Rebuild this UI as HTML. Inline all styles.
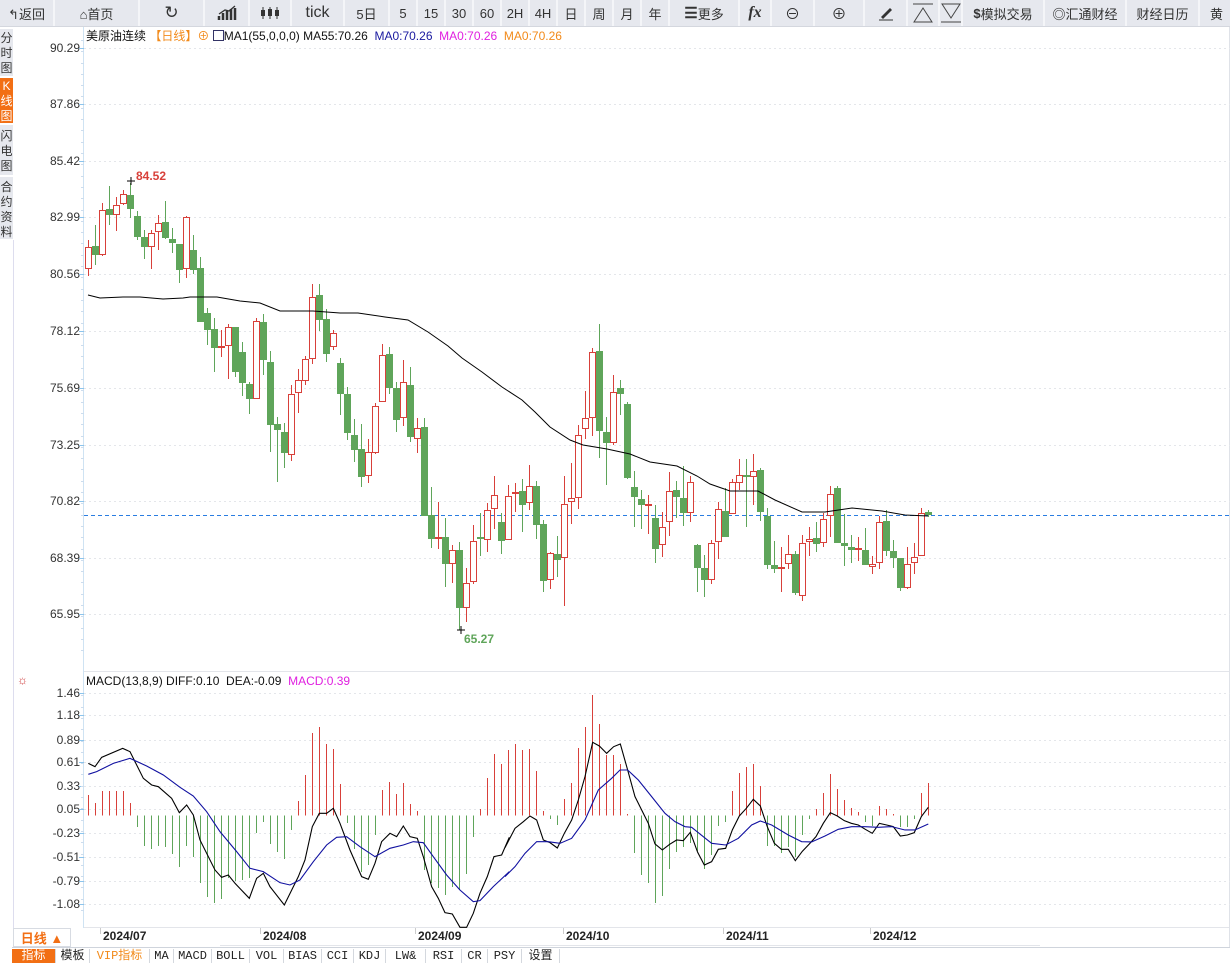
<!DOCTYPE html>
<html><head><meta charset="utf-8">
<style>
*{margin:0;padding:0;box-sizing:border-box}
body{width:1230px;height:961px;overflow:hidden;background:#fff;font-family:"Liberation Sans","Noto Sans CJK SC",sans-serif;position:relative}
#tb{position:absolute;left:0;top:0;width:1230px;height:27px;background:#e6e8ee;border-bottom:1px solid #d4d7de}
.b{position:absolute;top:0;height:26px;border-right:2px solid #f4f5f8;font-size:13px;color:#333;display:flex;align-items:center;justify-content:center;white-space:nowrap;overflow:hidden}
#side{position:absolute;left:0;top:27px;width:13px}
.tab{position:absolute;left:0;width:13px;background:#e6e8ee;color:#333;font-size:12px;line-height:15px;text-align:center;border-bottom:2px solid #fff}
.lab{position:absolute;font-size:12px;color:#333;text-align:right;width:70px;left:10px}
svg{position:absolute;left:0;top:0}
</style></head><body>
<div id="tb">
<div class="b" style="left:0;width:55px">&#x21B0;返回</div>
<div class="b" style="left:55px;width:85px">&#x2302;首页</div>
<div class="b" style="left:140px;width:65px;font-size:17px">&#x21BB;</div>
<div class="b" style="left:205px;width:45px"><svg style="position:static" width="20" height="16"><path d="M2 15V11M6 15V8M10 15V6M14 15V4M18 15V3" stroke="#333" stroke-width="2.5"/><path d="M2 9L8 5L12 6L18 1" stroke="#333" fill="none" stroke-width="1.3"/></svg></div>
<div class="b" style="left:250px;width:42px"><svg style="position:static" width="18" height="14"><path d="M2 1V13M9 1V13M16 1V13" stroke="#333"/><rect x="0" y="4" width="4" height="6" fill="#333"/><rect x="7" y="3" width="4" height="7" fill="#333"/><rect x="14" y="4" width="4" height="6" fill="#333"/></svg></div>
<div class="b" style="left:292px;width:53px;font-size:16px">tick</div>
<div class="b" style="left:345px;width:45px">5日</div>
<div class="b" style="left:390px;width:28px">5</div>
<div class="b" style="left:418px;width:28px">15</div>
<div class="b" style="left:446px;width:28px">30</div>
<div class="b" style="left:474px;width:28px">60</div>
<div class="b" style="left:502px;width:28px">2H</div>
<div class="b" style="left:530px;width:28px">4H</div>
<div class="b" style="left:558px;width:28px">日</div>
<div class="b" style="left:586px;width:28px">周</div>
<div class="b" style="left:614px;width:28px">月</div>
<div class="b" style="left:642px;width:28px">年</div>
<div class="b" style="left:670px;width:70px"><b style="font-size:15px">&#x2630;</b>更多</div>
<div class="b" style="left:740px;width:32px;font-family:'Liberation Serif',serif;font-style:italic;font-weight:bold;font-size:16px">fx</div>
<div class="b" style="left:772px;width:43px;font-size:15px">&#x2296;</div>
<div class="b" style="left:815px;width:50px;font-size:15px">&#x2295;</div>
<div class="b" style="left:865px;width:43px"><svg style="position:static" width="16" height="16"><path d="M3 12L12 3L14 5L5 14Z" fill="#333"/><path d="M1 15H15" stroke="#333"/></svg></div>
<div class="b" style="left:908px;width:32px"><svg style="position:static" width="22" height="20"><path d="M1 1H21M2 19L11 5L20 19Z" stroke="#444" fill="none"/></svg></div>
<div class="b" style="left:940px;width:23px"><svg style="position:static" width="22" height="20"><path d="M1 19H21M2 1L11 15L20 1Z" stroke="#444" fill="none"/></svg></div>
<div class="b" style="left:963px;width:82px"><b>$</b>模拟交易</div>
<div class="b" style="left:1045px;width:82px"><b>&#x25CE;</b>汇通财经</div>
<div class="b" style="left:1127px;width:73px">财经日历</div>
<div class="b" style="left:1200px;width:40px;justify-content:flex-start;padding-left:10px">黄</div>
</div>
<div id="side">
<div class="tab" style="top:2px;height:49px;padding-top:2px">分<br>时<br>图</div>
<div class="tab" style="top:51px;height:47px;background:#f26f14;color:#fff;padding-top:1px">K<br>线<br>图</div>
<div class="tab" style="top:98px;height:52px;padding-top:4px">闪<br>电<br>图</div>
<div class="tab" style="top:150px;height:64px;padding-top:3px">合<br>约<br>资<br>料</div>
</div>
<div style="position:absolute;left:86px;top:27px;font-size:12px;white-space:nowrap;color:#111">美原油连续 <span style="color:#f28a1a">【日线】⊕</span> <span style="display:inline-block;width:11px;height:11px;border:1px solid #336;vertical-align:-1px"></span>MA1(55,0,0,0) MA55:70.26 &nbsp;<span style="color:#1a1aa0">MA0:70.26</span> &nbsp;<span style="color:#e020e0">MA0:70.26</span> &nbsp;<span style="color:#f28a1a">MA0:70.26</span></div>
<div style="position:absolute;left:86px;top:674px;font-size:12px;white-space:nowrap;color:#111">MACD(13,8,9) DIFF:0.10 &nbsp;DEA:-0.09 &nbsp;<span style="color:#e020e0">MACD:0.39</span></div>
<div style="position:absolute;left:17px;top:673px;font-size:12px;color:#c33">&#x263C;</div>
<div id="labs"></div>
<svg id="s" width="1230" height="961"></svg>
<div style="position:absolute;left:13px;top:928px;width:58px;height:19px;border:1px solid #d7dbe2;color:#f26f14;font-size:13px;font-weight:bold;display:flex;align-items:center;justify-content:center;background:#fff">日线 ▲</div>
<div id="dates"></div>
<div id="bt" style="position:absolute;left:12px;top:947px;height:14px;width:1218px;font-size:12px;white-space:nowrap;border-top:1px solid #cfd4dc"></div>
<script>
var NS="http://www.w3.org/2000/svg",s=document.getElementById('s');
function el(t,a){var e=document.createElementNS(NS,t);for(var k in a)e.setAttribute(k,a[k]);s.appendChild(e);return e;}
// frame
el('line',{x1:83.5,y1:27,x2:83.5,y2:928,stroke:'#cfe3f3'});
el('line',{x1:13.5,y1:240,x2:13.5,y2:928,stroke:'#dde'});
el('line',{x1:84,y1:671.5,x2:1230,y2:671.5,stroke:'#e3e5ea'});
el('line',{x1:84,y1:927.5,x2:1230,y2:927.5,stroke:'#e3e5ea'});
el('line',{x1:1229.5,y1:27,x2:1229.5,y2:947,stroke:'#dfe2e8'});
var L=document.getElementById('labs'),h='';
var P=[["90.29",48],["87.86",104],["85.42",161],["82.99",217],["80.56",274],["78.12",331],["75.69",388],["73.25",445],["70.82",501],["68.39",558],["65.95",614],
["1.46",693],["1.18",715],["0.89",740],["0.61",762],["0.33",786],["0.05",809],["-0.23",833],["-0.51",857],["-0.79",881],["-1.08",904]];
P.forEach(function(p){h+='<div class="lab" style="top:'+(p[1]-7)+'px">'+p[0]+'</div>';
el('line',{x1:84,y1:p[1]+.5,x2:1230,y2:p[1]+.5,stroke:'#e4e6ea','stroke-dasharray':'2,3'});
el('line',{x1:79,y1:p[1]+.5,x2:84,y2:p[1]+.5,stroke:'#8cc4ec'});});
L.innerHTML=h;
for(var y=40;y<920;y+=11.3){if(y>660&&y<688)continue;el('line',{x1:81,y1:Math.round(y)+.5,x2:84,y2:Math.round(y)+.5,stroke:'#cde'});}
el('line',{x1:84,y1:515.5,x2:1230,y2:515.5,stroke:'#2a7de1','stroke-dasharray':'4,3'});
// candles: top,bottom,wtop,wbot,red
var C=[[247,269,240,276,1],[246,255,225,265,0],[210,255,203,256,1],[209,215,186,225,0],[205,215,197,231,1],[194,204,190,205,1],[195,209,183,218,0],[216,237,211,240,0],[237,247,230,259,0],[233,247,230,269,1],[223,232,215,250,1],[222,238,201,239,0],[239,243,228,253,0],[244,270,244,283,0],[217,269,216,278,1],[250,270,235,274,0],[268,322,257,322,0],[313,330,308,345,0],[329,348,318,372,0],[346,348,330,357,1],[327,346,324,379,1],[327,372,327,377,0],[352,383,342,396,0],[384,399,382,414,0],[321,399,318,399,1],[322,360,314,375,0],[362,425,351,452,0],[424,430,417,482,0],[432,453,423,468,0],[394,455,385,461,1],[380,393,369,413,1],[359,381,356,385,1],[297,359,284,364,1],[295,320,284,331,0],[319,354,309,362,0],[333,347,330,350,1],
[363,394,358,415,0],[394,433,387,440,0],[435,450,419,462,0],[449,477,424,487,0],[452,476,439,483,1],[406,453,403,454,1],[355,402,344,402,1],[354,388,347,394,0],[388,420,382,432,0],[382,418,360,426,1],[385,437,367,442,0],[428,439,418,453,1],[427,516,418,516,0],[515,539,487,548,0],[537,539,502,549,1],[537,564,518,587,0],[550,564,545,583,1],[550,608,542,630,0],[583,608,568,622,1],[541,582,525,584,1],[537,539,513,556,0],[510,540,503,552,1],[495,509,476,529,1],[522,541,513,554,0],[496,540,485,540,1],[492,494,483,512,1],[491,505,479,532,0],[486,503,465,510,1],
[486,525,481,539,0],[524,581,520,592,0],[553,580,552,589,1],[554,560,536,577,0],[504,558,476,606,1],[498,502,463,524,1],[435,498,425,509,1],[418,429,391,439,1],[352,418,348,436,1],[351,431,324,458,0],[432,443,417,485,0],[392,443,375,445,1],[388,394,380,415,0],[404,478,402,479,0],[487,497,471,527,0],[499,505,490,529,0],[504,506,495,534,1],[518,549,505,563,0],[527,545,512,557,1],[491,522,472,536,1],[490,497,481,518,0],[498,513,466,526,0],[482,513,476,522,1],[545,568,544,592,0],[568,580,555,597,0],[543,580,540,584,1],[509,542,502,559,1],
[511,537,488,537,0],[482,514,479,514,1],[475,483,459,490,1],[475,477,459,527,0],[471,477,454,505,1],[470,512,468,521,0],[516,565,508,569,0],[565,569,541,573,0],[567,569,547,592,1],[554,564,535,569,1],[554,593,551,595,0],[543,596,535,601,1],[539,542,527,556,1],[538,544,522,552,0],[519,543,513,547,1],[494,516,486,537,1],[488,543,486,543,0],[543,546,514,566,0],[547,550,535,563,0],[548,550,537,561,1],[550,565,528,565,0],[564,567,556,574,1],[522,563,516,569,1],[521,551,510,556,0],[551,558,540,568,0],[558,588,558,591,0],[564,588,547,589,1],[557,563,543,574,1],[513,556,508,556,1],[512,515,510,517,0]];
var R='#d8403a',G='#5fa55a';
C.forEach(function(c,i){var x=88+7*i,col=c[4]?R:G;
el('line',{x1:x+.5,y1:c[2],x2:x+.5,y2:c[3],stroke:col});
var hh=Math.max(c[1]-c[0],1);
if(c[4])el('rect',{x:x-2.5,y:c[0]+.5,width:6,height:Math.max(hh-1,1),fill:'#fff',stroke:col});
else el('rect',{x:x-3,y:c[0],width:7,height:hh,fill:col});});
// MA55
el('polyline',{points:'88,295 100,298 123,297 140,297 163,299 183,298 190,297 217,297 240,301 260,303 280,311 313,311 340,313 358,313 385,317 408,320 428,332 448,346 462,358 482,372 502,387 522,400 535,412 550,427 570,440 583,445 607,449 630,454 650,462 677,466 697,476 710,484 730,491 758,491 775,500 802,512 825,512 852,508 882,511 905,515 928,516',fill:'none',stroke:'#000'});
// hi/lo markers
el('path',{d:'M127 181H135M131 177V185M457 630H465M461 626V634',stroke:'#000'});
var t=el('text',{x:136,y:180,fill:'#d8403a','font-size':12,'font-weight':'bold','font-family':'Liberation Sans'});t.textContent='84.52';
t=el('text',{x:464,y:643,fill:'#5fa55a','font-size':12,'font-weight':'bold','font-family':'Liberation Sans'});t.textContent='65.27';
// MACD hist
var M=[795,803,791,791,791,791,803,827,846,849,846,847,854,867,846,857,883,897,903,899,878,881,880,878,833,822,844,852,859,830,801,775,733,727,744,749,784,823,849,872,865,835,790,782,794,783,804,811,870,883,888,895,887,890,874,837,809,778,754,764,750,744,750,749,771,811,819,825,799,783,748,727,695,724,755,755,764,814,853,875,883,903,896,869,852,847,843,851,869,855,826,822,791,773,767,764,786,846,846,853,847,857,835,819,809,793,774,789,800,808,812,822,826,806,809,814,827,827,819,793,783];
M.forEach(function(v,i){var x=88+7*i+.5;el('line',{x1:x,y1:815.5,x2:x,y2:v,stroke:v<815?R:G});});
function poly(pts,ox,col){var g=el('g',{transform:'translate('+ox+',690) scale(0.3333)'});var p=document.createElementNS(NS,'polyline');p.setAttribute('points',pts);p.setAttribute('fill','none');p.setAttribute('stroke',col);p.setAttribute('stroke-width',3.3);g.appendChild(p);}
poly('25,220 45,230 65,202 128,175 150,185 190,265 215,285 235,290 275,325 298,368 320,345 340,375 360,450 405,540 425,562 445,555 465,580 508,625 530,565 550,550 570,590 613,645 655,560 675,510 697,410 718,370 740,370 760,355 780,400 810,480 845,560 865,568 885,520 905,455 930,430 950,440 970,408 990,440 1012,445 1030,500 1055,590 1075,625 1095,668 1117,672 1140,712 1160,712 1180,670 1200,610 1222,560 1242,500 1265,495 1288,442',80,'#000');
poly('0,473 30,415 55,395 75,378 95,390 115,450 135,458 157,474 178,430 200,390 220,330 240,260 263,157 283,168 305,190 326,170 346,162 368,240 390,320 430,400 450,462 472,480 494,463 515,450 535,452 556,427 578,487 598,525 620,515 640,478 662,475 682,420 703,378 724,355 745,328 766,348 787,410 808,460 829,478 850,478 871,512 892,484 913,462 933,440 955,400 976,368 997,378 1018,392 1039,400 1060,405 1081,418 1102,430 1123,400 1145,405 1165,410 1186,438 1207,435 1228,428 1249,380 1270,352',505,'#000');
poly('25,253 50,245 100,220 150,205 200,228 250,255 300,292 340,318 380,365 420,425 470,485 510,535 550,545 600,578 630,585 660,570 700,515 740,465 770,442 800,440 840,470 885,500 930,475 970,465 1000,455 1030,458 1060,500 1100,555 1140,600 1180,635 1200,632 1240,590 1288,545',80,'#1010a0');
poly('0,560 30,530 60,490 95,455 130,455 165,460 200,445 240,390 280,300 320,265 345,240 368,240 400,270 440,320 480,370 510,395 540,410 560,412 580,428 620,460 662,465 700,445 740,405 766,393 800,405 850,435 890,455 920,456 960,438 1000,418 1040,410 1080,410 1120,412 1160,410 1200,420 1230,420 1270,402',505,'#1010a0');
// dates
var D=[[103,'2024/07'],[263,'2024/08'],[418,'2024/09'],[566,'2024/10'],[726,'2024/11'],[873,'2024/12']],dh='';
D.forEach(function(d){dh+='<div style="position:absolute;left:'+d[0]+'px;top:929px;font-size:12px;font-weight:bold;color:#222">'+d[1]+'</div>';
el('line',{x1:d[0]-2.5,y1:928,x2:d[0]-2.5,y2:934,stroke:'#ccc'});});
el('line',{x1:220,y1:945.5,x2:1040,y2:945.5,stroke:'#e3e5ea'});
document.getElementById('dates').innerHTML=dh;
var B=[['指标',44,1],['模板',34],['VIP指标',60,2],['MA',24],['MACD',38],['BOLL',38],['VOL',34],['BIAS',38],['CCI',32],['KDJ',32],['LW&',40],['RSI',36],['CR',26],['PSY',34],['设置',38]],bh='';
B.forEach(function(b){bh+='<span style="display:inline-block;height:14px;line-height:14px;text-align:center;width:'+b[1]+'px;border-right:1px solid #d4d8de;font-family:\'Liberation Mono\',\'Noto Sans CJK SC\',monospace;'+(b[2]==1?'background:#f26f14;color:#fff;':b[2]==2?'color:#f28a1a;':'color:#222;')+'">'+b[0]+'</span>';});
document.getElementById('bt').innerHTML=bh;
</script>
</body></html>
